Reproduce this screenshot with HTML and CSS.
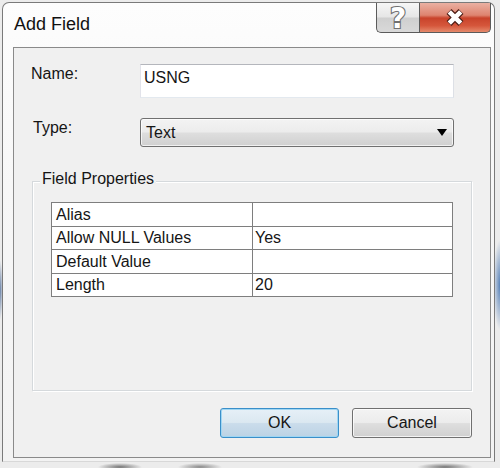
FILE: index.html
```html
<!DOCTYPE html>
<html>
<head>
<meta charset="utf-8">
<link rel="stylesheet" href="styles.css">
</head>
<body>
<div class="window">
  <div class="titlebar">
    <div class="title">Add Field</div>
    <div class="caption">
      <div class="cap-btn help"><span class="help-glyph">?</span></div>
      <div class="cap-btn close">
        <svg width="22" height="19" viewBox="0 0 22 19">
          <path d="M5 3.5 L17 15.5 M17 3.5 L5 15.5" stroke="#4b1c14" stroke-width="7" stroke-linecap="butt" fill="none"/>
          <path d="M5.3 3.8 L16.7 15.2 M16.7 3.8 L5.3 15.2" stroke="#ffffff" stroke-width="4.6" stroke-linecap="butt" fill="none"/>
        </svg>
      </div>
    </div>
  </div>
  <div class="client">
    <div class="form-row">
      <div class="lbl">Name:</div>
      <div class="textbox">USNG</div>
    </div>
    <div class="form-row type-row">
      <div class="lbl lbl-type">Type:</div>
      <div class="combo">
        <span>Text</span>
        <svg class="arrow" width="10" height="7" viewBox="0 0 10 7"><polygon points="0,0 10,0 5,7" fill="#000"/></svg>
      </div>
    </div>
    <div class="group">
      <div class="group-title">Field Properties</div>
      <div class="props">
        <div class="cell key r1">Alias</div><div class="cell val r1"></div>
        <div class="cell key">Allow NULL Values</div><div class="cell val">Yes</div>
        <div class="cell key">Default Value</div><div class="cell val"></div>
        <div class="cell key last">Length</div><div class="cell val last">20</div>
      </div>
    </div>
    <div class="buttons">
      <button class="btn btn-default ok">OK</button>
      <button class="btn cancel">Cancel</button>
    </div>
  </div>
</div>
</body>
</html>
```

FILE: styles.css
```css
html, body {
  margin: 0;
  width: 500px;
  height: 468px;
  overflow: hidden;
}

body {
  box-sizing: border-box;
  padding: 2px 0 0 2px;
  font-family: "Liberation Sans", Arial, sans-serif;
  color: #151515;
  background:
    radial-gradient(ellipse 7px 45px at 500px 285px, rgba(61,111,176,0.85), rgba(61,111,176,0) 100%),
    radial-gradient(ellipse 22px 4px at 120px 467px, rgba(40,40,40,0.6), rgba(40,40,40,0) 100%),
    radial-gradient(ellipse 22px 4px at 200px 467px, rgba(40,40,40,0.5), rgba(40,40,40,0) 100%),
    radial-gradient(ellipse 28px 4px at 445px 467px, rgba(40,40,40,0.6), rgba(40,40,40,0) 100%),
    radial-gradient(ellipse 3px 30px at 0px 290px, rgba(43,79,134,0.7), rgba(43,79,134,0) 100%),
    #ececec;
}

.window {
  width: 493px;
  height: 460px;
  box-sizing: border-box;
  border: 1px solid #7a7a7a;
  border-bottom-color: #d8d8d8;
  border-radius: 7px 7px 0 0;
  background: linear-gradient(#fdfdfd, #f7f7f7 40%, #f3f3f3);
  padding: 0 3px 3px 10px;
  display: flex;
  flex-direction: column;
}

.titlebar {
  height: 44px;
  display: flex;
  align-items: flex-start;
  justify-content: space-between;
}

.title {
  font-size: 18px;
  line-height: 21px;
  margin: 11px 0 0 1px;
  color: #111;
}

.caption {
  display: flex;
  height: 30px;
}

.cap-btn {
  box-sizing: border-box;
  height: 30px;
  border: 1px solid #5b5b5b;
  border-top: none;
  display: flex;
  align-items: center;
  justify-content: center;
}

.help {
  width: 43px;
  border-right: none;
  border-radius: 0 0 0 5px;
  background: linear-gradient(#f6f6f6, #e6e6e6 48%, #cfcfcf 52%, #d9d9d9);
}

.help-glyph {
  font-family: "DejaVu Sans", sans-serif;
  font-weight: bold;
  font-size: 28px;
  line-height: 28px;
  color: #ffffff;
  -webkit-text-stroke: 2.2px #707070;
  paint-order: stroke fill;
  margin-top: 2px;
}

.close {
  width: 72px;
  border-radius: 0 0 5px 0;
  background: linear-gradient(#eab0a2, #de8470 42%, #c9432b 52%, #d5563b 78%, #e58a6c);
}

.client {
  flex: 1;
  box-sizing: border-box;
  border: 1px solid #8a8a8a;
  background: #f0f0f0;
  padding: 16px 18px 19px 17px;
  display: flex;
  flex-direction: column;
}

.form-row {
  display: flex;
  align-items: flex-start;
}

.type-row {
  margin-top: 20px;
}

.lbl {
  width: 109px;
  font-size: 16px;
  line-height: 18px;
  padding-top: 1px;
  box-sizing: border-box;
}

.lbl-type {
  padding-left: 2px;
}

.textbox {
  width: 314px;
  height: 34px;
  box-sizing: border-box;
  border: 1px solid;
  border-color: #b4b6bc #dde0e6 #e3e9ef #e2e3ea;
  background: #ffffff;
  font-size: 16px;
  line-height: 18px;
  padding: 4px 3px 0;
}

.combo {
  width: 314px;
  height: 29px;
  box-sizing: border-box;
  border: 1px solid #707070;
  border-radius: 3px;
  background: linear-gradient(#f3f3f3, #ececec 48%, #dedede 52%, #d0d0d0);
  box-shadow: inset 0 0 0 1px rgba(255,255,255,0.7);
  display: flex;
  align-items: center;
  justify-content: space-between;
  padding: 0 6px 0 5px;
  font-size: 16px;
  line-height: 18px;
}

.group {
  margin: 34px 0 0 1px;
  height: 210px;
  box-sizing: border-box;
  border: 1px solid #d5d9dc;
  box-shadow: inset 1px 1px 0 #ffffff, 1px 1px 0 #ffffff;
}

.group-title {
  width: fit-content;
  margin: -12px 0 0 7px;
  padding: 0 2px;
  background: #f0f0f0;
  font-size: 16px;
  line-height: 18px;
}

.props {
  margin: 14px 0 0 18px;
  width: 402px;
  box-sizing: border-box;
  border: 1px solid #7e7e7e;
  background: #ffffff;
  display: grid;
  grid-template-columns: 201px 1fr;
  grid-template-rows: 24px 23px 24px 22px;
}

.cell {
  box-sizing: border-box;
  border-bottom: 1px solid #7e7e7e;
  font-size: 16px;
  line-height: 18px;
  display: flex;
  align-items: center;
  white-space: nowrap;
}

.cell.last {
  border-bottom: none;
}

.key {
  border-right: 1px solid #7e7e7e;
  padding-left: 4px;
}

.val {
  padding-left: 2px;
}

.buttons {
  margin-top: 17px;
  display: flex;
  justify-content: flex-end;
  gap: 13px;
}

.btn {
  height: 30px;
  box-sizing: border-box;
  padding: 0;
  font-family: "Liberation Sans", Arial, sans-serif;
  font-size: 16px;
  color: #151515;
  border: 1px solid #707070;
  border-radius: 3px;
  background: linear-gradient(#f3f3f3, #ececec 48%, #dedede 52%, #d0d0d0);
  box-shadow: inset 0 0 0 1px rgba(255,255,255,0.75);
}

.ok {
  width: 119px;
}

.cancel {
  width: 120px;
}

.btn-default {
  border-color: #3a8fc9;
  background: linear-gradient(#e6f0f7, #dbe8f1 48%, #cadceb 52%, #bcd3e4);
  box-shadow: inset 0 0 0 1px #9fd6f3;
}
```
